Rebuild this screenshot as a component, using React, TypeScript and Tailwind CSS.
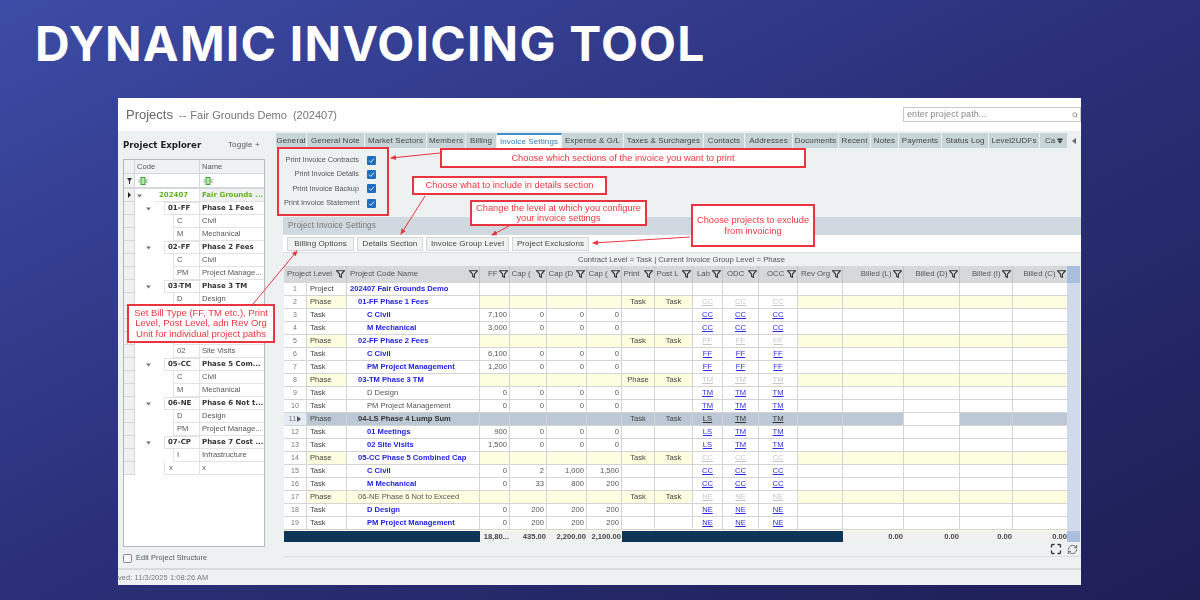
import { Maximize, RefreshCw, Search } from "lucide-react";

const sans = "font-['Liberation_Sans',Arial,sans-serif]";

const Funnel = () => (
  <svg width="9" height="8" viewBox="0 0 9 8" className="shrink-0">
    <path d="M0.5 0.7H8.5L5.4 4V7.4L3.6 6.4V4Z" fill="#e8e8e8" stroke="#2f3538" strokeWidth="1.1" />
  </svg>
);

const Tri = () => (
  <svg width="5" height="4" viewBox="0 0 5 4"><path d="M0 0.5H5L2.5 3.5Z" fill="#777" /></svg>
);

const ContainsIcon = () => (
  <svg width="11" height="8" viewBox="0 0 11 8">
    <path d="M0.5 3H2M0.5 5H2" stroke="#8a9a80" strokeWidth="1" />
    <rect x="3" y="0.5" width="4" height="7" fill="#b9e6a8" stroke="#3aa53a" strokeWidth="1" />
    <path d="M10 3C9 2 8 3 8 4S9 6 10 5" fill="none" stroke="#777" strokeWidth="0.8" />
  </svg>
);

const tabs = [
  ["General", "w-[31px]"],
  ["General Note", "w-[58px]"],
  ["Market Sectors", "w-[62px]"],
  ["Members", "w-[39px]"],
  ["Billing", "w-[31px]"],
  ["Invoice Settings", "w-[65px]"],
  ["Expense & G/L", "w-[62px]"],
  ["Taxes & Surcharges", "w-[80px]"],
  ["Contacts", "w-[41px]"],
  ["Addresses", "w-[48px]"],
  ["Documents", "w-[46px]"],
  ["Recent", "w-[32px]"],
  ["Notes", "w-[28px]"],
  ["Payments", "w-[43px]"],
  ["Status Log", "w-[47px]"],
  ["Level2UDFs", "w-[51px]"],
];

type Tree = [number, string, string];
const tree: Tree[] = [
  [1, "01-FF", "Phase 1 Fees"],
  [2, "C", "Civil"],
  [2, "M", "Mechanical"],
  [1, "02-FF", "Phase 2 Fees"],
  [2, "C", "Civil"],
  [2, "PM", "Project Manage..."],
  [1, "03-TM", "Phase 3 TM"],
  [2, "D", "Design"],
  [2, "", ""],
  [1, "", ""],
  [2, "", ""],
  [2, "02", "Site Visits"],
  [1, "05-CC", "Phase 5 Com..."],
  [2, "C", "Civil"],
  [2, "M", "Mechanical"],
  [1, "06-NE", "Phase 6 Not t..."],
  [2, "D", "Design"],
  [2, "PM", "Project Manage..."],
  [1, "07-CP", "Phase 7 Cost ..."],
  [2, "I", "Infrastructure"],
];

const headers: [string, string][] = [
  ["Project Code Name", "justify-between pl-[3px]"],
  ["FF", "justify-end gap-px"],
  ["Cap (", "justify-between"],
  ["Cap (D", "justify-between"],
  ["Cap (", "justify-between"],
  ["Print", "justify-between"],
  ["Post L", "justify-between"],
  ["Lab", "justify-between pl-[4px]"],
  ["ODC", "justify-between pl-[4px]"],
  ["OCC", "justify-between pl-[8px]"],
  ["Rev Org", "justify-between pl-[3px]"],
  ["Billed (L)", "justify-end gap-px"],
  ["Billed (D)", "justify-end gap-px"],
  ["Billed (I)", "justify-end gap-px"],
  ["Billed (C)", "justify-end gap-px"],
];

type Row = {
  lvl: string;
  name: string;
  link?: boolean;
  vals?: string[];
  print?: string;
  post?: string;
  code?: string;
  yellowName?: boolean;
  sel?: boolean;
  codes?: string[];
};

const rows: Row[] = [
  { lvl: "Project", name: "202407 Fair Grounds Demo", link: true },
  { lvl: "Phase", name: "01-FF Phase 1 Fees", link: true, print: "Task", post: "Task", code: "CC" },
  { lvl: "Task", name: "C Civil", link: true, vals: ["7,100", "0", "0", "0"], code: "CC" },
  { lvl: "Task", name: "M Mechanical", link: true, vals: ["3,000", "0", "0", "0"], code: "CC" },
  { lvl: "Phase", name: "02-FF Phase 2 Fees", link: true, print: "Task", post: "Task", code: "FF" },
  { lvl: "Task", name: "C Civil", link: true, vals: ["6,100", "0", "0", "0"], code: "FF" },
  { lvl: "Task", name: "PM Project Management", link: true, vals: ["1,200", "0", "0", "0"], code: "FF" },
  { lvl: "Phase", name: "03-TM Phase 3 TM", link: true, print: "Phase", post: "Task", code: "TM" },
  { lvl: "Task", name: "D Design", vals: ["0", "0", "0", "0"], code: "TM" },
  { lvl: "Task", name: "PM Project Management", vals: ["0", "0", "0", "0"], code: "TM" },
  { lvl: "Phase", name: "04-LS Phase 4 Lump Sum", sel: true, print: "Task", post: "Task", codes: ["LS", "TM", "TM"] },
  { lvl: "Task", name: "01 Meetings", link: true, vals: ["900", "0", "0", "0"], codes: ["LS", "TM", "TM"] },
  { lvl: "Task", name: "02 Site Visits", link: true, vals: ["1,500", "0", "0", "0"], codes: ["LS", "TM", "TM"] },
  { lvl: "Phase", name: "05-CC Phase 5 Combined Cap", link: true, print: "Task", post: "Task", code: "CC" },
  { lvl: "Task", name: "C Civil", link: true, vals: ["0", "2", "1,000", "1,500"], code: "CC" },
  { lvl: "Task", name: "M Mechanical", link: true, vals: ["0", "33", "800", "200"], code: "CC" },
  { lvl: "Phase", name: "06-NE Phase 6 Not to Exceed", yellowName: true, print: "Task", post: "Task", code: "NE" },
  { lvl: "Task", name: "D Design", link: true, vals: ["0", "200", "200", "200"], code: "NE" },
  { lvl: "Task", name: "PM Project Management", link: true, vals: ["0", "200", "200", "200"], code: "NE" },
];

const gridCols =
  "grid grid-cols-[23px_40px_133px_30px_37px_40px_35px_33px_38px_30px_36px_39px_45px_61px_56px_53px_55px]";
const cell = "h-[13px] border-r border-b border-[#d2d4d6] flex items-center overflow-hidden whitespace-nowrap";

function DataRow({ r, i }: { r: Row; i: number }) {
  const phase = r.lvl === "Phase";
  const project = r.lvl === "Project";
  const bg = r.sel ? "bg-[#bcc8d5]" : phase ? "bg-[#fdfde0]" : "bg-white";
  const nameBg = r.sel ? "bg-[#bcc8d5]" : r.yellowName ? "bg-[#fdfde0]" : "bg-white";
  const indent = project ? "pl-[3px]" : phase ? "pl-[11px]" : "pl-[20px]";
  const nameText = r.link
    ? "text-[#2222e6] font-bold"
    : r.sel
      ? "text-[#333] font-bold"
      : "text-[#555]";
  const vals = r.vals ?? ["", "", "", ""];
  const codes = r.codes ?? (r.code ? [r.code, r.code, r.code] : ["", "", ""]);
  const codeColor = r.sel
    ? "text-[#333]"
    : phase
      ? "text-[#c6c6c6]"
      : "text-[#2a2ae8]";
  return (
    <div className={gridCols}>
      <div className={`${cell} justify-center gap-px text-[7px] text-[#777] ${r.sel ? "bg-[#e4ebf3]" : "bg-white"}`}>
        {i + 1}
        {r.sel && <span className="border-y-[3px] border-l-[4px] border-y-transparent border-l-[#555]" />}
      </div>
      <div className={`${cell} pl-[3px] text-[#444] ${bg}`}>{r.lvl}</div>
      <div className={`${cell} ${nameBg} ${indent} ${nameText}`}>{r.name}</div>
      {vals.map((v, k) => (
        <div key={k} className={`${cell} ${bg} justify-end pr-[2px] text-[#555]`}>{v}</div>
      ))}
      <div className={`${cell} ${bg} justify-center text-[#444]`}>{r.print}</div>
      <div className={`${cell} ${bg} justify-center text-[#444]`}>{r.post}</div>
      {codes.map((c, k) => (
        <div key={k} className={`${cell} ${r.sel ? "bg-[#bcc8d5]" : "bg-white"} justify-center underline ${codeColor}`}>{c}</div>
      ))}
      <div className={`${cell} ${bg}`} />
      <div className={`${cell} ${bg}`} />
      <div className={`${cell} ${r.sel ? "bg-white" : bg}`} />
      <div className={`${cell} ${bg}`} />
      <div className={`${cell} ${bg}`} />
    </div>
  );
}

const callout =
  "absolute flex items-center justify-center text-center bg-white border-2 border-[#ea3540] text-[#f0353f] text-[9.3px] leading-[10.4px]";

const totals = ["18,80...", "435.00", "2,200.00", "2,100.00"];

export default function App() {
  return (
    <div className={`w-[1200px] h-[600px] overflow-hidden bg-linear-to-br from-[#3d4ca6] via-[#2b2f78] to-[#1e1f55] ${sans}`}>
      <div className="h-[98px] pl-[35px] pt-[15px]">
        <h1 className="font-['Inter',sans-serif] font-bold text-white text-[48px] leading-[58px] tracking-[1.2px] whitespace-nowrap">
          DYNAMIC INVOICING TOOL
        </h1>
      </div>

      <div className="relative ml-[118px] w-[963px] h-[487px] bg-[#eef1f2] flex flex-col text-[8px] blur-[0.35px]">
        {/* top header */}
        <div className="h-[33px] bg-white flex items-center justify-between pl-[8px] text-[#777]">
          <div className="flex items-baseline whitespace-nowrap">
            <span className="text-[13px] text-[#666]">Projects</span>
            <span className="text-[11px] ml-[6px]">--</span>
            <span className="text-[11px] ml-[4px]">Fair Grounds Demo</span>
            <span className="text-[11px] ml-[6px]">(202407)</span>
          </div>
          <div className="w-[178px] h-[15px] border border-[#c9c9c9] flex items-center justify-between pl-[3px] pr-[2px] text-[9px] text-[#888] tracking-[0.1px]">
            enter project path...
            <Search size={6} strokeWidth={3} className="text-[#888]" />
          </div>
        </div>

        <div className="flex-1 flex min-h-0">
          {/* left panel */}
          <aside className="w-[155px] pl-[5px] flex flex-col text-[#555]">
            <div className="h-[28px] pr-[13px] flex items-center justify-between">
              <span className="font-['DejaVu_Sans',sans-serif] font-bold text-[8.6px] text-[#222]">Project Explorer</span>
              <span className="text-[8px] text-[#555] tracking-[0.2px]">Toggle +</span>
            </div>
            <div className="w-[142px] h-[388px] border border-[#b3babd] bg-white flex flex-col text-[7.6px]">
              <div className="flex h-[14px] bg-[#eff1f2] border-b border-[#d5d8da]">
                <div className="w-[11px] border-r border-[#d5d8da]" />
                <div className="w-[65px] pl-[2px] border-r border-[#d5d8da] flex items-center">Code</div>
                <div className="flex-1 pl-[2px] flex items-center">Name</div>
              </div>
              <div className="flex h-[15px] border-b-2 border-[#d5d8da]">
                <div className="w-[11px] border-r border-[#d5d8da] bg-[#eff1f2] flex items-center justify-center">
                  <svg width="5" height="6" viewBox="0 0 5 6"><path d="M0 0H5L3 3V6H2V3Z" fill="#333" /></svg>
                </div>
                <div className="w-[65px] pl-[3px] border-r border-[#d5d8da] flex items-center"><ContainsIcon /></div>
                <div className="flex-1 pl-[3px] flex items-center"><ContainsIcon /></div>
              </div>
              {/* root row */}
              <div className="flex h-[13px]">
                <div className="w-[11px] bg-[#eff1f2] border-r border-b border-[#d5d8da] flex items-center justify-center">
                  <span className="border-y-[3px] border-l-[3px] border-y-transparent border-l-[#222]" />
                </div>
                <div className="w-[20px] pl-[2px] flex items-center"><Tri /></div>
                <div className="w-[45px] pl-[4px] border-r border-b border-[#e1e3e5] flex items-center font-['DejaVu_Sans',sans-serif] font-bold text-[7px] text-[#62b31c]">202407</div>
                <div className="flex-1 pl-[2px] bg-[#f0f1f2] border-b border-[#e1e3e5] flex items-center font-['DejaVu_Sans',sans-serif] font-bold text-[7px] text-[#62b31c] whitespace-nowrap overflow-hidden">Fair Grounds ...</div>
              </div>
              {tree.map(([lv, code, name], i) => (
                <div key={i} className="flex h-[13px]">
                  <div className="w-[11px] bg-[#eff1f2] border-r border-b border-[#d5d8da]" />
                  {lv === 1 ? (
                    <>
                      <div className="w-[29px] pl-[11px] flex items-center"><Tri /></div>
                      <div className="w-[36px] pl-[3px] border-y border-x border-[#e1e3e5] flex items-center font-['DejaVu_Sans',sans-serif] font-bold text-[7px] text-[#333]">{code}</div>
                      <div className="flex-1 pl-[2px] border-b border-[#e1e3e5] flex items-center font-['DejaVu_Sans',sans-serif] font-bold text-[7px] text-[#333] whitespace-nowrap overflow-hidden">{name}</div>
                    </>
                  ) : (
                    <>
                      <div className="w-[38px]" />
                      <div className="w-[27px] pl-[3px] border-x border-b border-[#e1e3e5] flex items-center">{code}</div>
                      <div className="flex-1 pl-[2px] border-b border-[#e1e3e5] flex items-center whitespace-nowrap overflow-hidden">{name}</div>
                    </>
                  )}
                </div>
              ))}
              <div className="flex h-[13px]">
                <div className="w-[11px] bg-[#eff1f2] border-r border-b border-[#d5d8da]" />
                <div className="w-[29px]" />
                <div className="w-[36px] pl-[4px] border-x border-b border-[#e1e3e5] flex items-center">x</div>
                <div className="flex-1 pl-[2px] border-b border-[#e1e3e5] flex items-center">x</div>
              </div>
            </div>
            <div className="flex items-center gap-[4px] mt-[6px] text-[7.3px] text-[#555] tracking-[0.1px]">
              <span className="w-[9px] h-[9px] border border-[#888] rounded-[2px] bg-white" />
              Edit Project Structure
            </div>
          </aside>

          {/* right panel */}
          <section className="flex-1 min-w-0 pt-[2px] flex flex-col text-[#555]">
            <div className="h-[15px] ml-[3px] flex items-stretch bg-[#eef1f2] shrink-0">
              {tabs.map(([t, w]) => (
                <div
                  key={t}
                  className={`${w} shrink-0 flex items-center justify-center whitespace-nowrap border-r border-[#eef1f2] tracking-[0.1px] ${
                    t === "Invoice Settings"
                      ? "bg-white border-t-2 border-t-[#3f8fd0] text-[#2f7fb8]"
                      : "bg-[#c8d5d8] text-[#444]"
                  }`}
                >
                  {t}
                </div>
              ))}
              <div className="w-[27px] bg-[#c8d5d8] flex items-center pl-[5px] gap-[2px] text-[#444]">
                Ca
                <svg width="6" height="6" viewBox="0 0 6 6"><path d="M0.5 0.5H5.5V2H0.5ZM0.5 2.5H5.5L3 5.5Z" fill="#333" /></svg>
              </div>
              <div className="flex-1 flex items-center justify-center">
                <span className="border-y-[3px] border-r-[4px] border-y-transparent border-r-[#666]" />
              </div>
            </div>

            <div className="h-[69px] shrink-0 pt-[5px] pl-[11px] flex flex-col text-[#555]">
              {["Print Invoice Contracts", "Print Invoice Details", "Print Invoice Backup", "Print Invoice Statement"].map((l) => (
                <div key={l} className="h-[14.4px] flex items-center">
                  <span className="w-[75px] text-right whitespace-nowrap text-[7.3px]">{l}</span>
                  <span className="ml-[7.5px] w-[9px] h-[9px] rounded-[1px] bg-[#1f6fc0] flex items-center justify-center">
                    <svg width="7" height="7" viewBox="0 0 7 7"><path d="M1 3.6L2.8 5.4L6 1.6" fill="none" stroke="#dce9f5" strokeWidth="1" /></svg>
                  </span>
                </div>
              ))}
            </div>

            <div className="ml-[10px] flex-1 min-h-0 flex flex-col">
              <div className="h-[18px] shrink-0 bg-[#d0d9df] flex items-center pl-[5px] text-[8.2px] text-[#777] tracking-[0.1px]">Project Invoice Settings</div>
              <div className="h-[17px] shrink-0 bg-white flex items-center pl-[4px] gap-[3px] text-[#444]">
                {[
                  ["Billing Options", "w-[67px]"],
                  ["Details Section", "w-[66px]"],
                  ["Invoice Group Level", "w-[83px]"],
                  ["Project Exclusions", "w-[77px]"],
                ].map(([b, w]) => (
                  <div key={b} className={`${w} h-[14px] bg-[#f0f1f1] border border-[#d4d6d7] flex items-center justify-center whitespace-nowrap tracking-[0.1px]`}>{b}</div>
                ))}
              </div>
              <div className="h-[14px] shrink-0 flex items-center pl-[295px] text-[7.7px] text-[#555] whitespace-nowrap border-t border-[#dcdfe1]">
                Contract Level = Task | Current Invoice Group Level = Phase
              </div>

              <div className="flex pl-px text-[7.6px]">
                <div className="w-[783px] flex flex-col">
                  <div className={gridCols}>
                    <div className="col-span-2 h-[17px] bg-[#d6d8d9] border-r border-[#c2c5c7] flex items-center justify-between pl-[3px] pr-[1.5px] pb-px whitespace-nowrap text-[#555] text-[7.8px]">
                      Project Level
                      <Funnel />
                    </div>
                    {headers.map(([h, j], i) => (
                      <div key={i} className={`h-[17px] bg-[#d6d8d9] border-r border-[#c2c5c7] flex items-center px-[1.5px] pb-px whitespace-nowrap overflow-hidden text-[#555] text-[7.8px] ${j}`}>
                        {h}
                        <Funnel />
                      </div>
                    ))}
                  </div>
                  {rows.map((r, i) => (
                    <DataRow key={i} r={r} i={i} />
                  ))}
                  <div className="h-px bg-[#fdfde0]" />
                  <div className={`${gridCols} h-[11px] font-bold text-[#444]`}>
                    <div className="col-span-3 bg-[#0f3557]" />
                    {totals.map((t, i) => (
                      <div key={i} className="bg-[#f1f1f1] flex items-center justify-end pr-[1px] whitespace-nowrap overflow-hidden">{t}</div>
                    ))}
                    <div className="col-span-6 bg-[#0f3557]" />
                    {["0.00", "0.00", "0.00", "0.00"].map((t, i) => (
                      <div key={i} className="bg-[#f1f1f1] flex items-center justify-end pr-[1px]">{t}</div>
                    ))}
                  </div>
                </div>
                <div className="w-[13px] flex flex-col bg-[#d0daea]">
                  <div className="h-[17px] bg-[#a9bfdd]" />
                  <div className="flex-1" />
                  <div className="h-[11px] bg-[#a9bfdd]" />
                </div>
              </div>
              <div className="h-[15px] shrink-0 border-b border-[#dcdfe1] flex items-center justify-end pr-[3px] gap-[5px]">
                <Maximize size={12} strokeWidth={2.6} className="text-[#333]" />
                <RefreshCw size={11} strokeWidth={1.8} className="text-[#555]" />
              </div>
            </div>
          </section>
        </div>

        <div className="h-[17px] shrink-0 border-t-2 border-[#d8dbdd] flex items-center text-[7.4px] text-[#777] tracking-[0.1px]">ved: 11/3/2025 1:08:26 AM</div>

        {/* annotations */}
        <div className="absolute left-[159px] top-[49px] w-[112px] h-[69px] border-2 border-[#ea3540]" />
        <div className={`${callout} left-[322px] top-[50px] w-[366px] h-[20px]`}>Choose which sections of the invoice you want to print</div>
        <div className={`${callout} left-[294px] top-[78px] w-[195px] h-[19px]`}>Choose what to include in details section</div>
        <div className={`${callout} left-[352px] top-[102px] w-[177px] h-[26px]`}>Change the level at which you configure<br />your invoice settings</div>
        <div className={`${callout} left-[573px] top-[106px] w-[124px] h-[43px]`}>Choose projects to exclude<br />from invoicing</div>
        <div className={`${callout} left-[9px] top-[206px] w-[148px] h-[39px] text-[9.5px]`}>Set Bill Type (FF, TM etc.), Print<br />Level, Post Level, adn Rev Org<br />Unit for individual project paths</div>
        <svg className="absolute inset-0 pointer-events-none" width="963" height="487" viewBox="118 98 963 487">
          <defs>
            <marker id="ah" markerWidth="6" markerHeight="6" refX="5" refY="2.5" orient="auto" markerUnits="userSpaceOnUse">
              <path d="M0 0L6 2.5L0 5Z" fill="#ea3540" />
            </marker>
          </defs>
          <g stroke="#ea3540" strokeWidth="1">
            <line x1="440" y1="153" x2="391" y2="158" markerEnd="url(#ah)" />
            <line x1="425" y1="196" x2="401" y2="234" markerEnd="url(#ah)" />
            <line x1="509" y1="226" x2="492" y2="235" markerEnd="url(#ah)" />
            <line x1="690" y1="237" x2="593" y2="243" markerEnd="url(#ah)" />
            <line x1="253" y1="304" x2="297" y2="251" markerEnd="url(#ah)" />
          </g>
        </svg>
      </div>
    </div>
  );
}
